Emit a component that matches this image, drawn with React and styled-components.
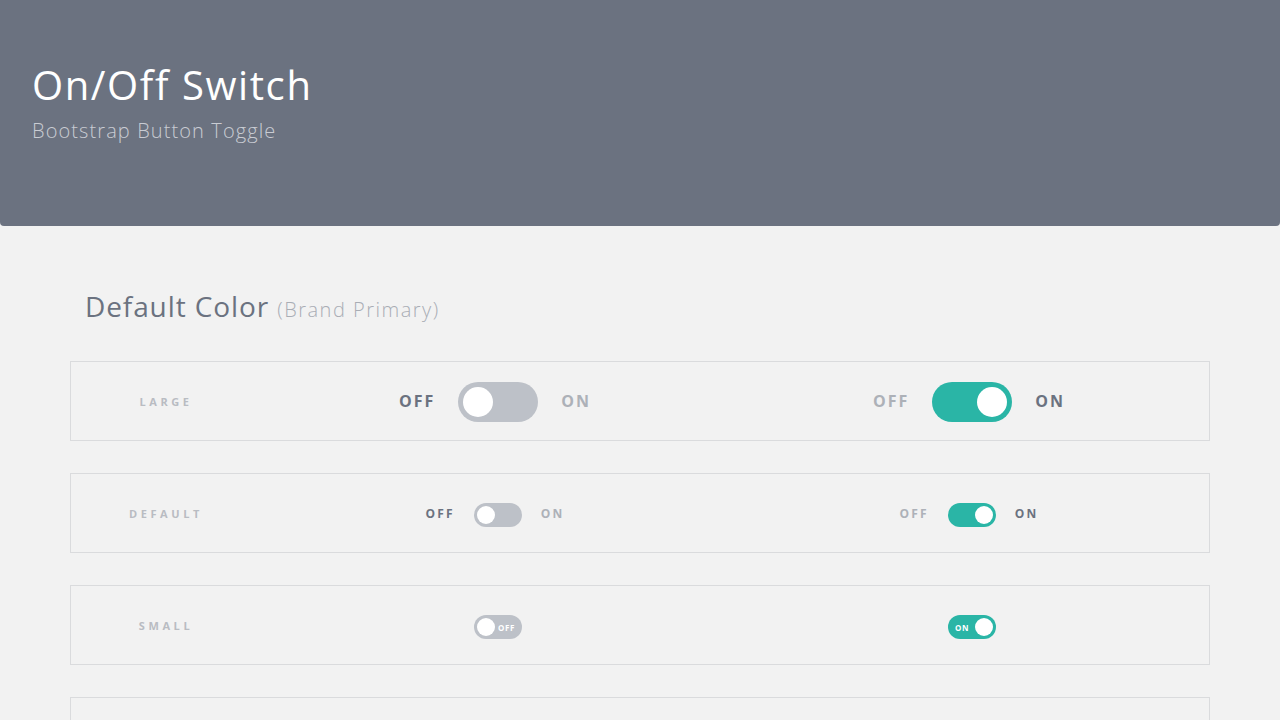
import React from "react";
import styled, { createGlobalStyle } from "styled-components";

const Global = createGlobalStyle`
  html, body { margin: 0; padding: 0; background: #f2f2f2; }
  body { font-family: "Open Sans", "Liberation Sans", sans-serif; }
`;

const Header = styled.header`
  background: #6b7280;
  height: 226px;
  box-sizing: border-box;
  padding: 59px 32px 0;
  border-radius: 0 0 4px 4px;
`;

const Title = styled.h1`
  margin: 0;
  font-family: "Open Sans", sans-serif;
  font-weight: 400;
  font-size: 40px;
  line-height: 52px;
  color: #ffffff;
  letter-spacing: 1.6px;
`;

const Subtitle = styled.p`
  margin: 6px 0 0;
  font-family: "Open Sans", sans-serif;
  font-weight: 300;
  font-size: 20px;
  line-height: 28px;
  color: #c9ccd3;
  letter-spacing: 1.1px;
`;

const Main = styled.main`
  width: 1140px;
  margin: 0 auto;
  padding-top: 60px;
`;

const SectionTitle = styled.h2`
  margin: 0 0 31px;
  padding-left: 15px;
  font-family: "Open Sans", sans-serif;
  font-weight: 400;
  font-size: 28px;
  line-height: 40px;
  color: #6b7280;
  letter-spacing: 0.9px;
`;

const Muted = styled.small`
  font-weight: 300;
  font-size: 20px;
  color: #a9adb5;
  letter-spacing: 1.5px;
`;

const List = styled.div`
  display: flex;
  flex-direction: column;
  gap: 32px;
`;

const Row = styled.div`
  display: grid;
  grid-template-columns: 190px 1fr 1fr;
  align-items: center;
  height: 80px;
  box-sizing: border-box;
  border: 1px solid #dadbdd;
`;

const RowLabel = styled.div`
  text-align: center;
  font-family: "Open Sans", sans-serif;
  font-weight: 700;
  font-size: 11px;
  letter-spacing: 3.6px;
  color: #b9bcc2;
`;

const Cell = styled.div`
  display: flex;
  justify-content: center;
  align-items: center;
`;

const Group = styled.div`
  display: inline-flex;
  align-items: center;
  gap: ${(p) => (p.$size === "lg" ? "23px" : "19px")};
  margin-left: -6px;
`;

const SideLabel = styled.span`
  font-family: "Open Sans", sans-serif;
  font-weight: 700;
  font-size: ${(p) => (p.$size === "lg" ? "16px" : "12px")};
  letter-spacing: ${(p) => (p.$size === "lg" ? "2px" : "2.2px")};
  color: ${(p) => (p.$active ? "#6b7280" : "#adb1b8")};
`;

const dims = {
  lg: { w: 80, h: 40, k: 30, i: 5, t: 2 },
  md: { w: 48, h: 24, k: 18, i: 3, t: 4 },
  sm: { w: 48, h: 24, k: 18, i: 3, t: 4 },
};

const Track = styled.div`
  position: relative;
  flex: none;
  width: ${(p) => dims[p.$size].w}px;
  height: ${(p) => dims[p.$size].h}px;
  margin-top: ${(p) => dims[p.$size].t}px;
  border-radius: ${(p) => dims[p.$size].h / 2}px;
  background: ${(p) => (p.$on ? "#2ab5a6" : "#bdc1c8")};
  box-sizing: border-box;
`;

const Knob = styled.span`
  position: absolute;
  top: ${(p) => dims[p.$size].i}px;
  left: ${(p) =>
    p.$on
      ? dims[p.$size].w - dims[p.$size].i - dims[p.$size].k
      : dims[p.$size].i}px;
  width: ${(p) => dims[p.$size].k}px;
  height: ${(p) => dims[p.$size].k}px;
  border-radius: 50%;
  background: #ffffff;
`;

const InnerText = styled.span`
  position: absolute;
  top: 0;
  bottom: 0;
  display: flex;
  align-items: center;
  ${(p) => (p.$on ? "left: 7px;" : "left: 24px;")}
  font-family: "Open Sans", sans-serif;
  font-weight: 700;
  font-size: 8px;
  letter-spacing: 0.6px;
  color: #ffffff;
`;

function Switch({ size, on }) {
  return (
    <Track $size={size} $on={on}>
      {size === "sm" && <InnerText $on={on}>{on ? "ON" : "OFF"}</InnerText>}
      <Knob $size={size} $on={on} />
    </Track>
  );
}

function Toggle({ size, on }) {
  if (size === "sm") return <Switch size={size} on={on} />;
  return (
    <Group $size={size}>
      <SideLabel $size={size} $active={!on}>OFF</SideLabel>
      <Switch size={size} on={on} />
      <SideLabel $size={size} $active={on}>ON</SideLabel>
    </Group>
  );
}

const rows = [
  { label: "LARGE", size: "lg" },
  { label: "DEFAULT", size: "md" },
  { label: "SMALL", size: "sm" },
  { label: "", size: "md", empty: true },
];

export default function App() {
  return (
    <>
      <Global />
      <Header>
        <Title>On/Off Switch</Title>
        <Subtitle>Bootstrap Button Toggle</Subtitle>
      </Header>
      <Main>
        <SectionTitle>
          Default Color <Muted>(Brand Primary)</Muted>
        </SectionTitle>
        <List>
          {rows.map((r, i) => (
            <Row key={i}>
              <RowLabel>{r.label}</RowLabel>
              <Cell>{!r.empty && <Toggle size={r.size} on={false} />}</Cell>
              <Cell>{!r.empty && <Toggle size={r.size} on={true} />}</Cell>
            </Row>
          ))}
        </List>
      </Main>
    </>
  );
}
